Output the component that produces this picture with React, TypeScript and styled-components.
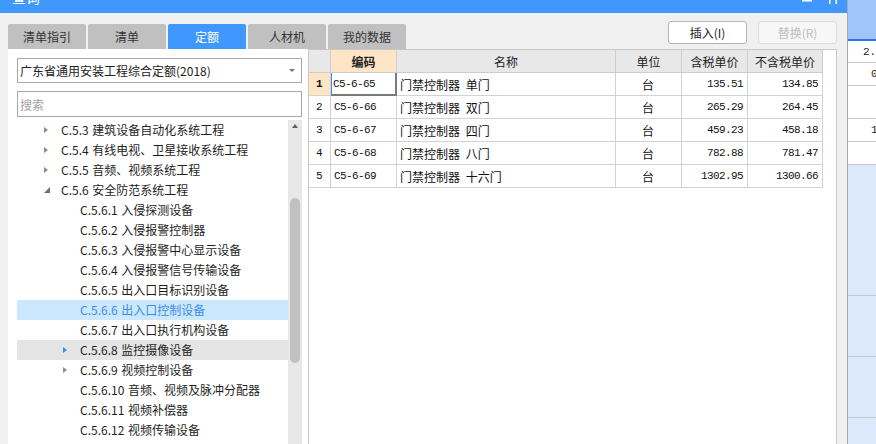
import React from 'react';
import styled, { createGlobalStyle } from 'styled-components';

const GlobalStyle = createGlobalStyle`
  html, body { margin: 0; padding: 0; width: 876px; height: 444px; overflow: hidden; background: #f0f0f0; }
  body { font-family: "Noto Sans CJK SC", "Microsoft YaHei", sans-serif; color: #222; }
  #root { width: 876px; height: 444px; }
  * { box-sizing: border-box; }
`;

const BLUE = '#4098ff';
const MONO = `"Liberation Mono", "Noto Sans CJK SC", monospace`;

const Screen = styled.div`
  display: flex;
  width: 876px;
  height: 444px;
  overflow: hidden;
`;

const Dialog = styled.div`
  width: 847px;
  flex: none;
  display: flex;
  flex-direction: column;
  background: #f0f0f0;
`;

const TitleBar = styled.div`
  height: 13px;
  flex: none;
  background: ${BLUE};
  display: flex;
  align-items: flex-start;
  overflow: hidden;
  padding: 0 9px 0 12px;
`;

const TitleText = styled.span`
  color: #fff;
  font-size: 14px;
  line-height: 14px;
  margin-top: -10px;
`;

const TitleIcons = styled.div`
  margin-left: auto;
  display: flex;
  gap: 16px;
  align-items: flex-start;
`;

const Body = styled.div`
  flex: 1;
  min-height: 0;
  display: flex;
  flex-direction: column;
  padding: 0 10px 0 8px;
`;

const TopRow = styled.div`
  height: 36px;
  flex: none;
  display: flex;
  justify-content: space-between;
`;

const TabBar = styled.div`
  display: flex;
  gap: 2px;
  align-self: flex-end;
`;

const Tab = styled.div<{ $active?: boolean }>`
  width: 78px;
  height: 25px;
  border-radius: 2px 2px 0 0;
  background: ${(p) => (p.$active ? BLUE : '#c0c0c0')};
  color: ${(p) => (p.$active ? '#fff' : '#333')};
  font-size: 12px;
  display: flex;
  align-items: center;
  justify-content: center;
`;

const ButtonGroup = styled.div`
  display: flex;
  gap: 11px;
  padding-top: 8px;
`;

const Button = styled.div<{ $disabled?: boolean }>`
  width: 79px;
  height: 23px;
  border: 1px solid ${(p) => (p.$disabled ? '#dcdcdc' : '#b4b4b4')};
  border-radius: 3px;
  background: ${(p) => (p.$disabled ? '#f7f7f7' : '#fff')};
  color: ${(p) => (p.$disabled ? '#bdbdbd' : '#222')};
  font-size: 12px;
  display: flex;
  align-items: center;
  justify-content: center;
`;

const Content = styled.div`
  flex: 1;
  min-height: 0;
  display: flex;
`;

const LeftPanel = styled.div`
  width: 300px;
  flex: none;
  background: #fff;
  display: flex;
  flex-direction: column;
  padding: 9px 6px 0 9px;
`;

const Combo = styled.div`
  height: 25px;
  border: 1px solid #a9a9a9;
  display: flex;
  align-items: center;
  padding: 0 6px 0 2px;
  font-size: 12px;
  color: #222;
`;

const ComboArrow = styled.span`
  margin-left: auto;
  width: 0;
  height: 0;
  border-left: 3px solid transparent;
  border-right: 3px solid transparent;
  border-top: 3px solid #777;
`;

const Search = styled.div`
  margin-top: 8px;
  height: 26px;
  border: 1px solid #a9a9a9;
  display: flex;
  align-items: center;
  padding-left: 2px;
  font-size: 12px;
  color: #a3a3a3;
`;

const TreeArea = styled.div`
  margin-top: 3px;
  flex: 1;
  min-height: 0;
  display: flex;
  overflow: hidden;
`;

const TreeList = styled.div`
  flex: 1;
  display: flex;
  flex-direction: column;
`;

const TreeRow = styled.div<{ $level: number; $state?: 'selected' | 'hover' }>`
  height: 20px;
  flex: none;
  display: flex;
  align-items: center;
  padding-left: ${(p) => 5 + p.$level * 19}px;
  padding-bottom: 2px;
  font-size: 12px;
  white-space: pre;
  word-spacing: 1px;
  background: ${(p) => (p.$state === 'selected' ? '#cce8ff' : p.$state === 'hover' ? '#e5e5e5' : 'transparent')};
  color: ${(p) => (p.$state === 'selected' ? '#3a8ee6' : '#1e1e1e')};
`;

const ArrowCell = styled.span`
  width: 20px;
  flex: none;
  display: flex;
  align-items: center;
  padding-left: 3px;
  padding-top: 1px;
`;

const Collapsed = styled.span<{ $blue?: boolean }>`
  width: 0;
  height: 0;
  border-top: 3.5px solid transparent;
  border-bottom: 3.5px solid transparent;
  border-left: 4px solid ${(p) => (p.$blue ? '#3c8fe6' : '#8c8c8c')};
`;

const Scrollbar = styled.div`
  width: 14px;
  flex: none;
  background: #e8e8e8;
  display: flex;
  flex-direction: column;
  align-items: center;
`;

const ScrollUp = styled.div`
  height: 12px;
  flex: none;
  display: flex;
  align-items: center;
  justify-content: center;
  &::before {
    content: '';
    border-left: 3.5px solid transparent;
    border-right: 3.5px solid transparent;
    border-bottom: 4px solid #606068;
  }
`;

const Thumb = styled.div`
  margin-top: 66px;
  width: 10px;
  height: 165px;
  border-radius: 5px;
  background: #c1c1c1;
`;

const RightPanel = styled.div`
  flex: 1;
  background: #fff;
  border: 1px solid #c8c8c8;
  border-bottom: none;
  display: flex;
  flex-direction: column;
`;

const Grid = styled.div`
  display: grid;
  grid-template-columns: 22px 66px 219px 66px 66px 75px;
  grid-auto-rows: 23px;
  width: max-content;
`;

const HeadCell = styled.div<{ $hl?: boolean; $bold?: boolean }>`
  background: ${(p) => (p.$hl ? '#fde5c5' : '#e8e8e8')};
  border-right: 1px solid #cdcdcd;
  border-bottom: 1px solid #cdcdcd;
  font-size: 12px;
  font-weight: ${(p) => (p.$bold ? 700 : 400)};
  display: flex;
  align-items: center;
  justify-content: center;
  color: #222;
`;

const Cell = styled.div<{ $align?: 'left' | 'center' | 'right'; $mono?: boolean; $hl?: boolean; $bold?: boolean; $sel?: boolean }>`
  background: ${(p) => (p.$hl ? '#fde5c5' : '#fff')};
  border-right: 1px solid #d2d2d2;
  border-bottom: 1px solid #d2d2d2;
  display: flex;
  align-items: center;
  justify-content: ${(p) => (p.$align === 'right' ? 'flex-end' : p.$align === 'center' ? 'center' : 'flex-start')};
  padding: 0 4px 0 3px;
  font-family: ${(p) => (p.$mono ? MONO : `"Noto Sans CJK SC", sans-serif`)};
  font-size: ${(p) => (p.$mono ? '11px' : '12px')};
  letter-spacing: ${(p) => (p.$mono ? '-0.6px' : '0')};
  font-weight: ${(p) => (p.$bold ? 700 : 400)};
  word-spacing: 3px;
  white-space: pre;
  color: #111;
  ${(p) =>
    p.$sel &&
    `
    border-left: 1px solid #3a8ee6;
    border-right: 2px solid #7a7a7a;
    border-bottom: 2px solid #7a7a7a;
    padding-left: 1px;
  `}
`;

const BgPanel = styled.div`
  flex: 1;
  border-left: 1px solid #a8a8a8;
  display: flex;
  flex-direction: column;
  overflow: hidden;
  background: #fff;
`;

const BgHeader = styled.div`
  height: 41px;
  flex: none;
  background: #a0c5fa;
  border-bottom: 2px solid #2a72f0;
`;

const BgRow = styled.div<{ $h: number; $pad?: number; $tint?: boolean }>`
  height: ${(p) => p.$h}px;
  flex: none;
  border-bottom: 1px solid #c6c6c6;
  background: ${(p) => (p.$tint ? '#dce8fb' : '#fff')};
  display: flex;
  align-items: center;
  padding-left: ${(p) => p.$pad ?? 0}px;
  font-family: ${MONO};
  font-size: 11px;
  white-space: nowrap;
  color: #222;
`;

type Node = { level: number; code: string; name: string; arrow?: 'c' | 'e' | 'cb'; state?: 'selected' | 'hover' };

const tree: Node[] = [
  { level: 1, code: 'C.5.3', name: '建筑设备自动化系统工程', arrow: 'c' },
  { level: 1, code: 'C.5.4', name: '有线电视、卫星接收系统工程', arrow: 'c' },
  { level: 1, code: 'C.5.5', name: '音频、视频系统工程', arrow: 'c' },
  { level: 1, code: 'C.5.6', name: '安全防范系统工程', arrow: 'e' },
  { level: 2, code: 'C.5.6.1', name: '入侵探测设备' },
  { level: 2, code: 'C.5.6.2', name: '入侵报警控制器' },
  { level: 2, code: 'C.5.6.3', name: '入侵报警中心显示设备' },
  { level: 2, code: 'C.5.6.4', name: '入侵报警信号传输设备' },
  { level: 2, code: 'C.5.6.5', name: '出入口目标识别设备' },
  { level: 2, code: 'C.5.6.6', name: '出入口控制设备', state: 'selected' },
  { level: 2, code: 'C.5.6.7', name: '出入口执行机构设备' },
  { level: 2, code: 'C.5.6.8', name: '监控摄像设备', arrow: 'cb', state: 'hover' },
  { level: 2, code: 'C.5.6.9', name: '视频控制设备', arrow: 'c' },
  { level: 2, code: 'C.5.6.10', name: '音频、视频及脉冲分配器' },
  { level: 2, code: 'C.5.6.11', name: '视频补偿器' },
  { level: 2, code: 'C.5.6.12', name: '视频传输设备' },
];

const rows = [
  ['C5-6-65', '门禁控制器 单门', '台', '135.51', '134.85'],
  ['C5-6-66', '门禁控制器 双门', '台', '265.29', '264.45'],
  ['C5-6-67', '门禁控制器 四门', '台', '459.23', '458.18'],
  ['C5-6-68', '门禁控制器 八门', '台', '782.88', '781.47'],
  ['C5-6-69', '门禁控制器 十六门', '台', '1302.95', '1300.66'],
];

const tabs = ['清单指引', '清单', '定额', '人材机', '我的数据'];

export default function App() {
  return (
    <>
      <GlobalStyle />
      <Screen>
        <Dialog>
          <TitleBar>
            <TitleText>查询</TitleText>
            <TitleIcons>
              <svg width="10" height="3" viewBox="0 0 10 3">
                <rect x="0" y="0" width="10" height="1.5" fill="#fff" />
              </svg>
              <svg width="10" height="4" viewBox="0 0 10 4">
                <rect x="1" y="0" width="1.5" height="4" fill="#fff" />
                <rect x="7.5" y="0" width="1.5" height="4" fill="#fff" />
              </svg>
            </TitleIcons>
          </TitleBar>
          <Body>
            <TopRow>
              <TabBar>
                {tabs.map((t) => (
                  <Tab key={t} $active={t === '定额'}>
                    {t}
                  </Tab>
                ))}
              </TabBar>
              <ButtonGroup>
                <Button>插入(I)</Button>
                <Button $disabled>替换(R)</Button>
              </ButtonGroup>
            </TopRow>
            <Content>
              <LeftPanel>
                <Combo>
                  广东省通用安装工程综合定额(2018)
                  <ComboArrow />
                </Combo>
                <Search>搜索</Search>
                <TreeArea>
                  <TreeList>
                    {tree.map((n) => (
                      <TreeRow key={n.code} $level={n.level} $state={n.state}>
                        <ArrowCell>
                          {n.arrow === 'c' && <Collapsed />}
                          {n.arrow === 'cb' && <Collapsed $blue />}
                          {n.arrow === 'e' && (
                            <svg width="6" height="6" viewBox="0 0 6 6">
                              <polygon points="6,0 6,6 0,6" fill="#6e6e6e" />
                            </svg>
                          )}
                        </ArrowCell>
                        {n.code} {n.name}
                      </TreeRow>
                    ))}
                  </TreeList>
                  <Scrollbar>
                    <ScrollUp />
                    <Thumb />
                  </Scrollbar>
                </TreeArea>
              </LeftPanel>
              <RightPanel>
                <Grid>
                  <HeadCell />
                  <HeadCell $hl $bold>编码</HeadCell>
                  <HeadCell>名称</HeadCell>
                  <HeadCell>单位</HeadCell>
                  <HeadCell>含税单价</HeadCell>
                  <HeadCell>不含税单价</HeadCell>
                  {rows.map((r, i) => (
                    <React.Fragment key={r[0]}>
                      <Cell $align="center" $mono $hl={i === 0} $bold={i === 0}>
                        {i + 1}
                      </Cell>
                      <Cell $mono $sel={i === 0}>{r[0]}</Cell>
                      <Cell>{r[1]}</Cell>
                      <Cell $align="center">{r[2]}</Cell>
                      <Cell $align="right" $mono>{r[3]}</Cell>
                      <Cell $align="right" $mono>{r[4]}</Cell>
                    </React.Fragment>
                  ))}
                </Grid>
              </RightPanel>
            </Content>
          </Body>
        </Dialog>
        <BgPanel>
          <BgHeader />
          <BgRow $h={22} $pad={15}>2.15</BgRow>
          <BgRow $h={23} $pad={23}>0.68</BgRow>
          <BgRow $h={33} />
          <BgRow $h={23} $pad={23}>1.00</BgRow>
          <BgRow $h={23} />
          <BgRow $h={131} $tint />
          <BgRow $h={61} $tint />
          <BgRow $h={61} $tint />
          <BgRow $h={40} $tint />
        </BgPanel>
      </Screen>
    </>
  );
}
